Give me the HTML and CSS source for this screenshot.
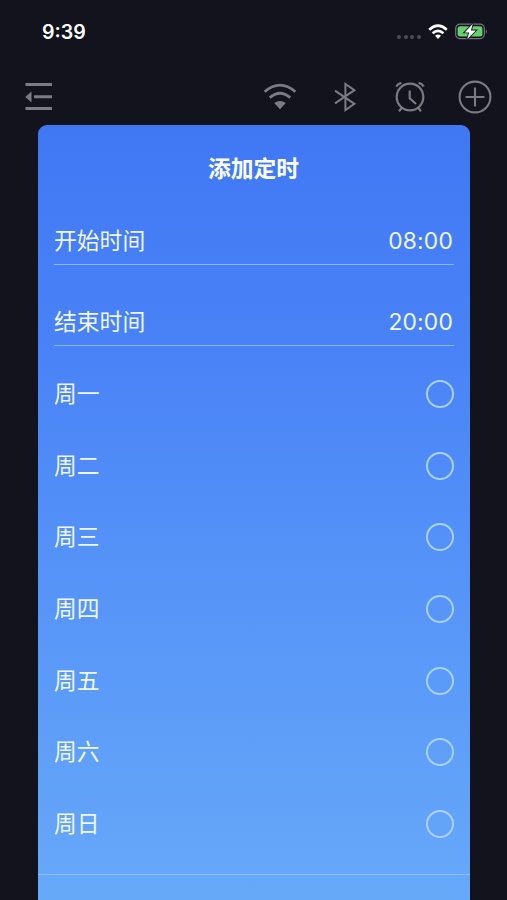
FILE: index.html
```html
<!DOCTYPE html>
<html lang="zh-CN">
<head>
<meta charset="utf-8">
<meta name="viewport" content="width=device-width">
<title>添加定时</title>
<link rel="stylesheet" href="styles.css">
</head>
<body>
<div class="screen">
  <header class="status">
    <span class="clock">9:39</span>
    <div class="indicators">
      <div class="dots"><i></i><i></i><i></i><i></i></div>
      <svg class="signal" width="20" height="16" viewBox="0 0 20 16" fill="none" stroke="#fff" stroke-width="2.6">
        <path d="M1.2 5.7Q10-2.3 18.8 5.7M4.6 9.2Q10 4.4 15.4 9.2"/>
        <path d="M7 11.8Q10 9.4 13 11.8L10 15Z" fill="#fff" stroke="none"/>
      </svg>
      <svg class="battery" width="33" height="17" viewBox="0 0 33 17">
        <rect x=".7" y="1.2" width="28.6" height="14.4" rx="4.2" fill="none" stroke="#75767c" stroke-width="1.2"/>
        <rect x="2.6" y="3.2" width="24.8" height="10.4" rx="2.4" fill="#66d16c"/>
        <path d="M30.8 6.2Q33 8.5 30.8 10.8Z" fill="#75767c"/>
        <path d="M17.8 .8L9.6 9.4H14.2L12.2 16.2L20.8 7.5H15.9Z" fill="#fff" stroke="#12131c" stroke-width="1.8" paint-order="stroke"/>
      </svg>
    </div>
  </header>
  <nav class="toolbar">
    <svg class="menu" width="28" height="30" viewBox="0 0 28 30">
      <path d="M.5 2.5H27M9 14.7H27M.5 26.5H27" stroke="#7b7b81" stroke-width="3" fill="none"/>
      <path d="M.3 15L6.5 9.5V20.5Z" fill="#7b7b81"/>
    </svg>
    <div class="tools">
      <svg width="34" height="34" viewBox="0 0 34 34" fill="none" stroke="#7b7b81" stroke-width="2.7">
        <path d="M1.6 11.7Q17-1.6 32.4 11.7M6.8 17.6Q17 8.9 27.2 17.6"/>
        <path d="M11.2 23Q17 18.8 22.8 23L17 29.2Z" fill="#7b7b81" stroke="none"/>
      </svg>
      <svg width="34" height="34" viewBox="0 0 34 34" fill="none" stroke="#7b7b81" stroke-width="2">
        <path d="M7 10.6L26.4 23.8L17.4 30V4L26.4 10.2L7 23.4"/>
      </svg>
      <svg width="34" height="34" viewBox="0 0 34 34" fill="none" stroke="#7b7b81" stroke-width="2.2">
        <circle cx="17" cy="17" r="13.3"/>
        <path d="M16.7 10.5V18.3L23 24M3.4 6.6Q4.5 3.8 8.5 3M30.6 6.6Q29.5 3.8 25.5 3M8.8 27.7L6 31.3M25.2 27.7L28 31.3"/>
      </svg>
      <svg width="34" height="34" viewBox="0 0 34 34" fill="none" stroke="#7b7b81" stroke-width="2.1">
        <circle cx="17" cy="17" r="15.4"/>
        <path d="M7.5 17H26.5M17 7.5V26.5"/>
      </svg>
    </div>
  </nav>
  <main class="card">
    <h1 class="title">添加定时</h1>
    <div class="field"><span>开始时间</span><span class="time">08:00</span></div>
    <div class="field"><span>结束时间</span><span class="time">20:00</span></div>
    <ul class="days">
      <li>周一<span class="radio"></span></li>
      <li>周二<span class="radio"></span></li>
      <li>周三<span class="radio"></span></li>
      <li>周四<span class="radio"></span></li>
      <li>周五<span class="radio"></span></li>
      <li>周六<span class="radio"></span></li>
      <li>周日<span class="radio"></span></li>
    </ul>
    <div class="footer"></div>
  </main>
</div>
</body>
</html>
```

FILE: styles.css
```css
* {
  box-sizing: border-box;
}

body {
  margin: 0;
  background: #12131c;
  color: #eef6ff;
  font-family: Inter, "Noto Sans CJK SC", sans-serif;
}

.screen {
  height: 900px;
  overflow: hidden;
  display: flex;
  flex-direction: column;
}

.status {
  height: 63px;
  flex: none;
  display: flex;
  align-items: center;
  justify-content: space-between;
  padding: 0 19px 0 42px;
}

.clock {
  color: #fff;
  font-size: 19.6px;
  font-weight: 600;
  line-height: 24px;
}

.indicators {
  display: flex;
  align-items: center;
}

.dots {
  display: flex;
  gap: 2.6px;
  margin: 10px 7px 0 0;
}

.dots i {
  width: 4px;
  height: 4px;
  border-radius: 50%;
  background: #4c4d55;
}

.battery {
  margin-left: 7px;
}

.toolbar {
  height: 62px;
  flex: none;
  display: flex;
  align-items: center;
  justify-content: space-between;
  padding: 6px 15.5px 0 25px;
}

.tools {
  display: flex;
  gap: 31px;
}

.card {
  flex: 1;
  margin: 0 37px 0 38px;
  border-radius: 9px 9px 0 0;
  background: linear-gradient(#4078f4, #4a83f7 30%, #5796f8 62%, #67a9f9);
  font-size: 22.8px;
}

.title {
  height: 92px;
  margin: 0;
  padding: 27px 1px 0 0;
  color: #fff;
  font-size: 22.8px;
  font-weight: 700;
  line-height: 34px;
  text-align: center;
}

.field {
  height: 48px;
  margin: 0 16px 33px;
  display: flex;
  justify-content: space-between;
  line-height: 48px;
  border-bottom: 1px solid #8ab7fc;
}

.time {
  margin-right: 1px;
  font-size: 22.8px;
  letter-spacing: 0.2px;
}

.days {
  margin: -20.5px 16px 0;
  padding: 0;
  list-style: none;
}

.days li {
  height: 71.6px;
  display: flex;
  align-items: center;
  justify-content: space-between;
  line-height: 32px;
}

.radio {
  width: 28px;
  height: 28px;
  border: 2px solid #a9d0fd;
  border-radius: 50%;
}

.footer {
  height: 30px;
  margin-top: 14px;
  border-top: 1px solid #8fc0fb;
}
```
